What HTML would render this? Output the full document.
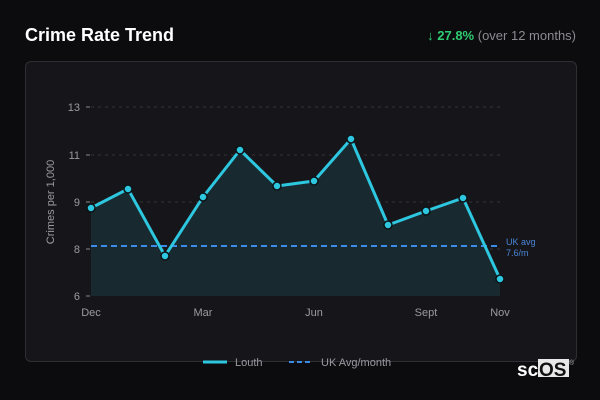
<!DOCTYPE html><html><head><style>
body{margin:0;width:600px;height:400px;background:#0c0c0f;font-family:"Liberation Sans","DejaVu Sans",sans-serif;overflow:hidden;position:relative}
.t{position:absolute;left:25px;top:25px;color:#fff;font-weight:bold;font-size:18px}
.r{position:absolute;right:24px;top:28px;font-size:13px;color:#8a8a90}
.r b{color:#2ecc71}
.p{position:absolute;left:25px;top:61px;width:550px;height:299px;border:1px solid #2e2e33;border-radius:6px;background:#16161a}
</style></head><body>
<div class="t">Crime Rate Trend</div>
<div class="r"><b>↓ 27.8%</b> (over 12 months)</div>
<div class="p"></div>
<svg width="600" height="400" style="position:absolute;left:0;top:0" font-family="Liberation Sans, DejaVu Sans, sans-serif">
<g stroke="#333338" stroke-dasharray="3,4" stroke-width="1">
<line x1="91" y1="107" x2="500" y2="107"/><line x1="91" y1="155" x2="500" y2="155"/><line x1="91" y1="202" x2="500" y2="202"/><line x1="91" y1="249" x2="500" y2="249"/></g>
<g fill="#9a9aa0" font-size="11" text-anchor="end">
<text x="80" y="111">13</text><text x="80" y="159">11</text><text x="80" y="206">9</text><text x="80" y="253">8</text><text x="80" y="300">6</text></g>
<g stroke="#888" stroke-width="1"><line x1="86" y1="107" x2="90" y2="107"/><line x1="86" y1="155" x2="90" y2="155"/><line x1="86" y1="202" x2="90" y2="202"/><line x1="86" y1="249" x2="90" y2="249"/><line x1="86" y1="296" x2="90" y2="296"/></g>
<text transform="translate(54,202) rotate(-90)" fill="#9a9aa0" font-size="11" text-anchor="middle">Crimes per 1,000</text>
<g fill="#9a9aa0" font-size="11" text-anchor="middle">
<text x="91" y="316">Dec</text><text x="203" y="316">Mar</text><text x="314" y="316">Jun</text><text x="426" y="316">Sept</text><text x="500" y="316">Nov</text></g>
<polygon fill="#18292f" points="91,296 91,208 128,189 165,256 203,197 240,150 277,186 314,181 351,139 388,225 426,211 463,198 500,279 500,296"/>
<line x1="91" y1="246" x2="497" y2="246" stroke="#3d8be8" stroke-width="2" stroke-dasharray="6,4"/>
<text x="506" y="245" fill="#4a85d8" font-size="9">UK avg</text><text x="506" y="256" fill="#4a85d8" font-size="9">7.6/m</text>
<polyline fill="none" stroke="#2ec7e0" stroke-width="3" stroke-linejoin="round" points="91,208 128,189 165,256 203,197 240,150 277,186 314,181 351,139 388,225 426,211 463,198 500,279"/>
<g fill="#2ec7e0" stroke="#0c1418" stroke-width="1.5">
<circle cx="91" cy="208" r="4"/><circle cx="128" cy="189" r="4"/><circle cx="165" cy="256" r="4"/><circle cx="203" cy="197" r="4"/><circle cx="240" cy="150" r="4"/><circle cx="277" cy="186" r="4"/><circle cx="314" cy="181" r="4"/><circle cx="351" cy="139" r="4"/><circle cx="388" cy="225" r="4"/><circle cx="426" cy="211" r="4"/><circle cx="463" cy="198" r="4"/><circle cx="500" cy="279" r="4"/></g>
<line x1="203" y1="362" x2="227" y2="362" stroke="#2ec7e0" stroke-width="3"/>
<text x="235" y="366" fill="#9a9aa0" font-size="11">Louth</text>
<line x1="289" y1="362" x2="313" y2="362" stroke="#3d8be8" stroke-width="2" stroke-dasharray="5,3"/>
<text x="321" y="366" fill="#9a9aa0" font-size="11">UK Avg/month</text>
<rect x="538" y="359" width="31" height="18" fill="#e8e8e8"/>
<text x="517" y="376" fill="#fff" font-size="19" font-weight="bold">sc</text>
<text x="539" y="376" fill="#111" font-size="19" font-weight="bold">OS</text>
<text x="569" y="365" fill="#aaa" font-size="7">®</text>
</svg>
</body></html>
